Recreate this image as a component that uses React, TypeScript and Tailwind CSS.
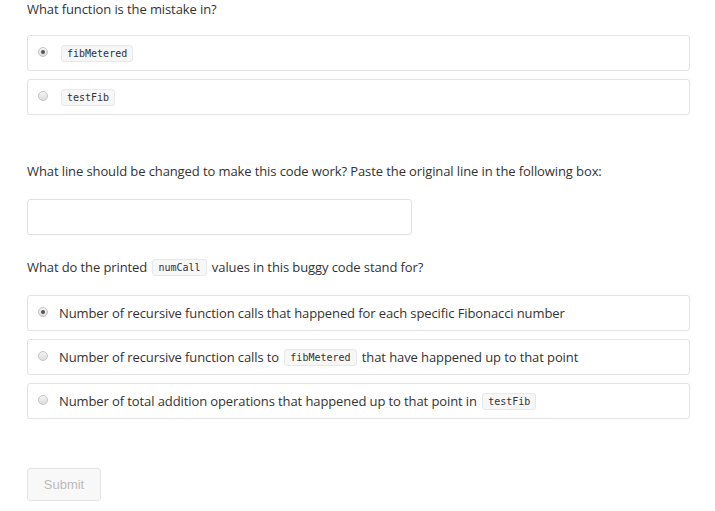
import React from "react";

const sans = { fontFamily: '"Open Sans", "Noto Sans", sans-serif' };

function Code({ children }: { children: React.ReactNode }) {
  return (
    <code
      className="mx-[2px] inline-block rounded-[3px] border border-[#e8e8e8] bg-[#f7f7f7] px-[5px] text-[10px] leading-[15px] tracking-normal text-[#333] align-middle"
      style={{ fontFamily: '"DejaVu Sans Mono", "Liberation Mono", monospace' }}
    >
      {children}
    </code>
  );
}

function Radio({ checked }: { checked?: boolean }) {
  return (
    <span className="relative inline-flex h-[10px] w-[10px] shrink-0 items-center justify-center rounded-full border border-[#c4c4c4] bg-gradient-to-b from-[#f4f4f4] to-[#dcdcdc]">
      {checked && <span className="h-[4px] w-[4px] rounded-full bg-[#555]" />}
    </span>
  );
}

function Option({ checked, children }: { checked?: boolean; children: React.ReactNode }) {
  return (
    <div className="flex h-[36px] items-center gap-[11px] rounded-[3px] border border-[#e3e3e3] bg-white pl-[10px]">
      <div className="-mt-[3px] flex">
        <Radio checked={checked} />
      </div>
      <div className="flex h-[18px] items-center whitespace-pre text-[13px] leading-[18px] tracking-[-0.1px] text-[#333]">
        {children}
      </div>
    </div>
  );
}

export default function App() {
  return (
    <div className="min-h-[511px] w-[715px] bg-white" style={sans}>
      <div className="w-[663px] pl-[27px] box-content">
        <p className="text-[13px] leading-[18px] tracking-[-0.1px] text-[#333]">What function is the mistake in?</p>
        <div className="mt-[17px] flex flex-col gap-[8px]">
          <Option checked>
            <Code>fibMetered</Code>
          </Option>
          <Option>
            <Code>testFib</Code>
          </Option>
        </div>

        <p className="mt-[47px] text-[13px] leading-[18px] tracking-[-0.1px] text-[#333]">
          What line should be changed to make this code work? Paste the original line in the following box:
        </p>
        <div className="mt-[19px] h-[36px] w-[385px] rounded-[3px] border border-[#e0e0e0] bg-white" />

        <p className="mt-[23px] flex h-[18px] items-center whitespace-pre text-[13px] leading-[18px] tracking-[-0.1px] text-[#333]">
          <span>{"What do the printed "}</span>
          <Code>
            <span className="text-[#3b2a48]">numCall</span>
          </Code>
          <span>{" values in this buggy code stand for?"}</span>
        </p>
        <div className="mt-[19px] flex flex-col gap-[8px]">
          <Option checked>
            <span>Number of recursive function calls that happened for each specific Fibonacci number</span>
          </Option>
          <Option>
            <span>{"Number of recursive function calls to "}</span>
            <Code>fibMetered</Code>
            <span>{" that have happened up to that point"}</span>
          </Option>
          <Option>
            <span>{"Number of total addition operations that happened up to that point in "}</span>
            <Code>testFib</Code>
          </Option>
        </div>

        <button
          className="mt-[49px] h-[33px] w-[74px] rounded-[3px] border border-[#e3e3e3] bg-[#f8f8f8] text-[13px] text-[#bbb]"
          style={{ fontFamily: '"Liberation Sans", Arial, sans-serif' }}
        >
          Submit
        </button>
      </div>
    </div>
  );
}
